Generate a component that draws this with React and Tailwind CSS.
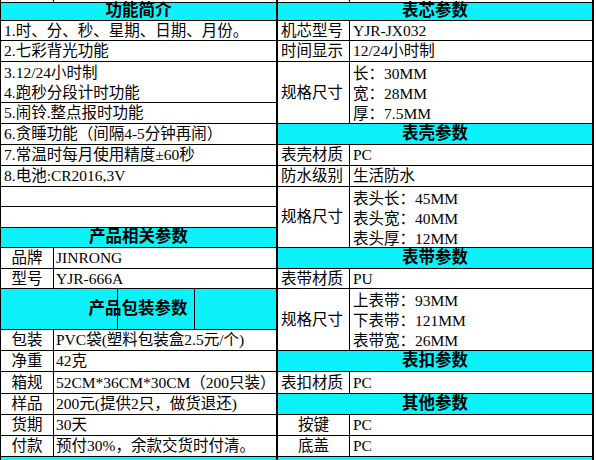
import React from "react";

const ROWS =
  "grid-rows-[3px_18px_20px_21px_21px_20px_21px_21px_21px_21px_20px_21px_20px_21px_20px_20px_21px_21px_21px_22px_21px_21px_21px_3px]";

function LText({ children, noBottom }) {
  return (
    <div
      className={`col-span-2 border-r-2 ${noBottom ? "" : "border-b"} border-black flex items-center pl-[3px] whitespace-nowrap overflow-hidden leading-none`}
    >
      {children}
    </div>
  );
}

function LHeader({ children }) {
  return (
    <div className="col-span-2 border-r-2 border-b border-black bg-[#0cf2fa] flex items-center justify-center font-bold text-[16.5px] leading-none">
      {children}
    </div>
  );
}

function LPair({ label, value }) {
  return (
    <>
      <div className="border-r border-b border-black flex items-center justify-center leading-none whitespace-nowrap">
        {label}
      </div>
      <div className="border-r-2 border-b border-black flex items-center pl-[2px] leading-none whitespace-nowrap overflow-hidden">
        {value}
      </div>
    </>
  );
}

function RHeader({ children }) {
  return (
    <div className="col-span-2 border-r-2 border-b border-black bg-[#0cf2fa] flex items-center justify-center font-bold text-[16.5px] leading-none">
      {children}
    </div>
  );
}

function RPair({ label, value, center }) {
  return (
    <>
      <div
        className={`border-r border-b border-black flex items-center ${center ? "justify-center" : "pl-[3px]"} leading-none whitespace-nowrap`}
      >
        {label}
      </div>
      <div className="border-r-2 border-b border-black flex items-center pl-[3px] leading-none whitespace-nowrap overflow-hidden">
        {value}
      </div>
    </>
  );
}

function RSize({ lines }) {
  return (
    <>
      <div className="row-span-3 border-r border-b border-black flex items-center pl-[3px] leading-none whitespace-nowrap">
        规格尺寸
      </div>
      <div className="row-span-3 border-r-2 border-b border-black flex flex-col pl-[3px] overflow-hidden leading-none">
        {lines.map((l, i) => (
          <div key={i} className="h-[20.3px] shrink-0 flex items-center pt-[3px] whitespace-nowrap">
            {l}
          </div>
        ))}
      </div>
    </>
  );
}

export default function App() {
  return (
    <div
      className="w-[596px] h-[460px] bg-white text-black text-[15.5px] flex overflow-hidden"
      style={{ fontFamily: '"Liberation Serif", "Noto Sans CJK SC", serif' }}
    >
      {/* Left table */}
      <div className={`grid grid-cols-[53px_224px] ${ROWS} border-l border-black`}>
        <div className="border-r border-b border-black" />
        <div className="border-r-2 border-b border-black" />

        <LHeader>功能简介</LHeader>
        <LText>1.时、分、秒、星期、日期、月份。</LText>
        <LText>2.七彩背光功能</LText>
        <LText noBottom>3.12/24小时制</LText>
        <LText>4.跑秒分段计时功能</LText>
        <LText>5.闹铃.整点报时功能</LText>
        <LText>6.贪睡功能（间隔4-5分钟再闹）</LText>
        <LText>7.常温时每月使用精度±60秒</LText>
        <LText>8.电池:CR2016,3V</LText>
        <LText>{""}</LText>
        <LText>{""}</LText>

        <LHeader>产品相关参数</LHeader>
        <LPair label="品牌" value="JINRONG" />
        <LPair label="型号" value="YJR-666A" />

        <div className="col-span-2 row-span-2 border-r-2 border-b border-black bg-[#0cf2fa] grid grid-cols-[117px_77px_1fr] grid-rows-1">
          <div className="col-start-1 row-start-1 border-r border-black" />
          <div className="col-start-2 row-start-1 border-r border-black" />
          <div className="col-start-1 col-end-4 row-start-1 flex items-center justify-center font-bold text-[16.5px] leading-none pr-[1px]">
            产品包装参数
          </div>
        </div>

        <LPair label="包装" value="PVC袋(塑料包装盒2.5元/个)" />
        <LPair label="净重" value="42克" />
        <LPair label="箱规" value="52CM*36CM*30CM（200只装）" />
        <LPair label="样品" value="200元(提供2只，做货退还)" />
        <LPair label="货期" value="30天" />
        <LPair label="付款" value="预付30%，余款交货时付清。" />

        <div className="col-span-2 border-r-2 border-black bg-[#0cf2fa]" />
      </div>

      {/* Right table */}
      <div className={`grid grid-cols-[72px_244px] ${ROWS}`}>
        <div className="border-r border-b border-black" />
        <div className="border-r-2 border-b border-black" />

        <RHeader>表芯参数</RHeader>
        <RPair label="机芯型号" value="YJR-JX032" />
        <RPair label="时间显示" value="12/24小时制" />
        <RSize lines={["长：30MM", "宽：28MM", "厚：7.5MM"]} />

        <RHeader>表壳参数</RHeader>
        <RPair label="表壳材质" value="PC" />
        <RPair label="防水级别" value="生活防水" />
        <RSize lines={["表头长：45MM", "表头宽：40MM", "表头厚：12MM"]} />

        <RHeader>表带参数</RHeader>
        <RPair label="表带材质" value="PU" />
        <RSize lines={["上表带：93MM", "下表带：121MM", "表带宽：26MM"]} />

        <RHeader>表扣参数</RHeader>
        <RPair label="表扣材质" value="PC" />

        <RHeader>其他参数</RHeader>
        <RPair label="按键" value="PC" center />
        <RPair label="底盖" value="PC" center />

        <div className="col-span-2 border-r-2 border-black bg-[#0cf2fa]" />
      </div>

      <div className="w-[2px] h-full bg-white" />
    </div>
  );
}
